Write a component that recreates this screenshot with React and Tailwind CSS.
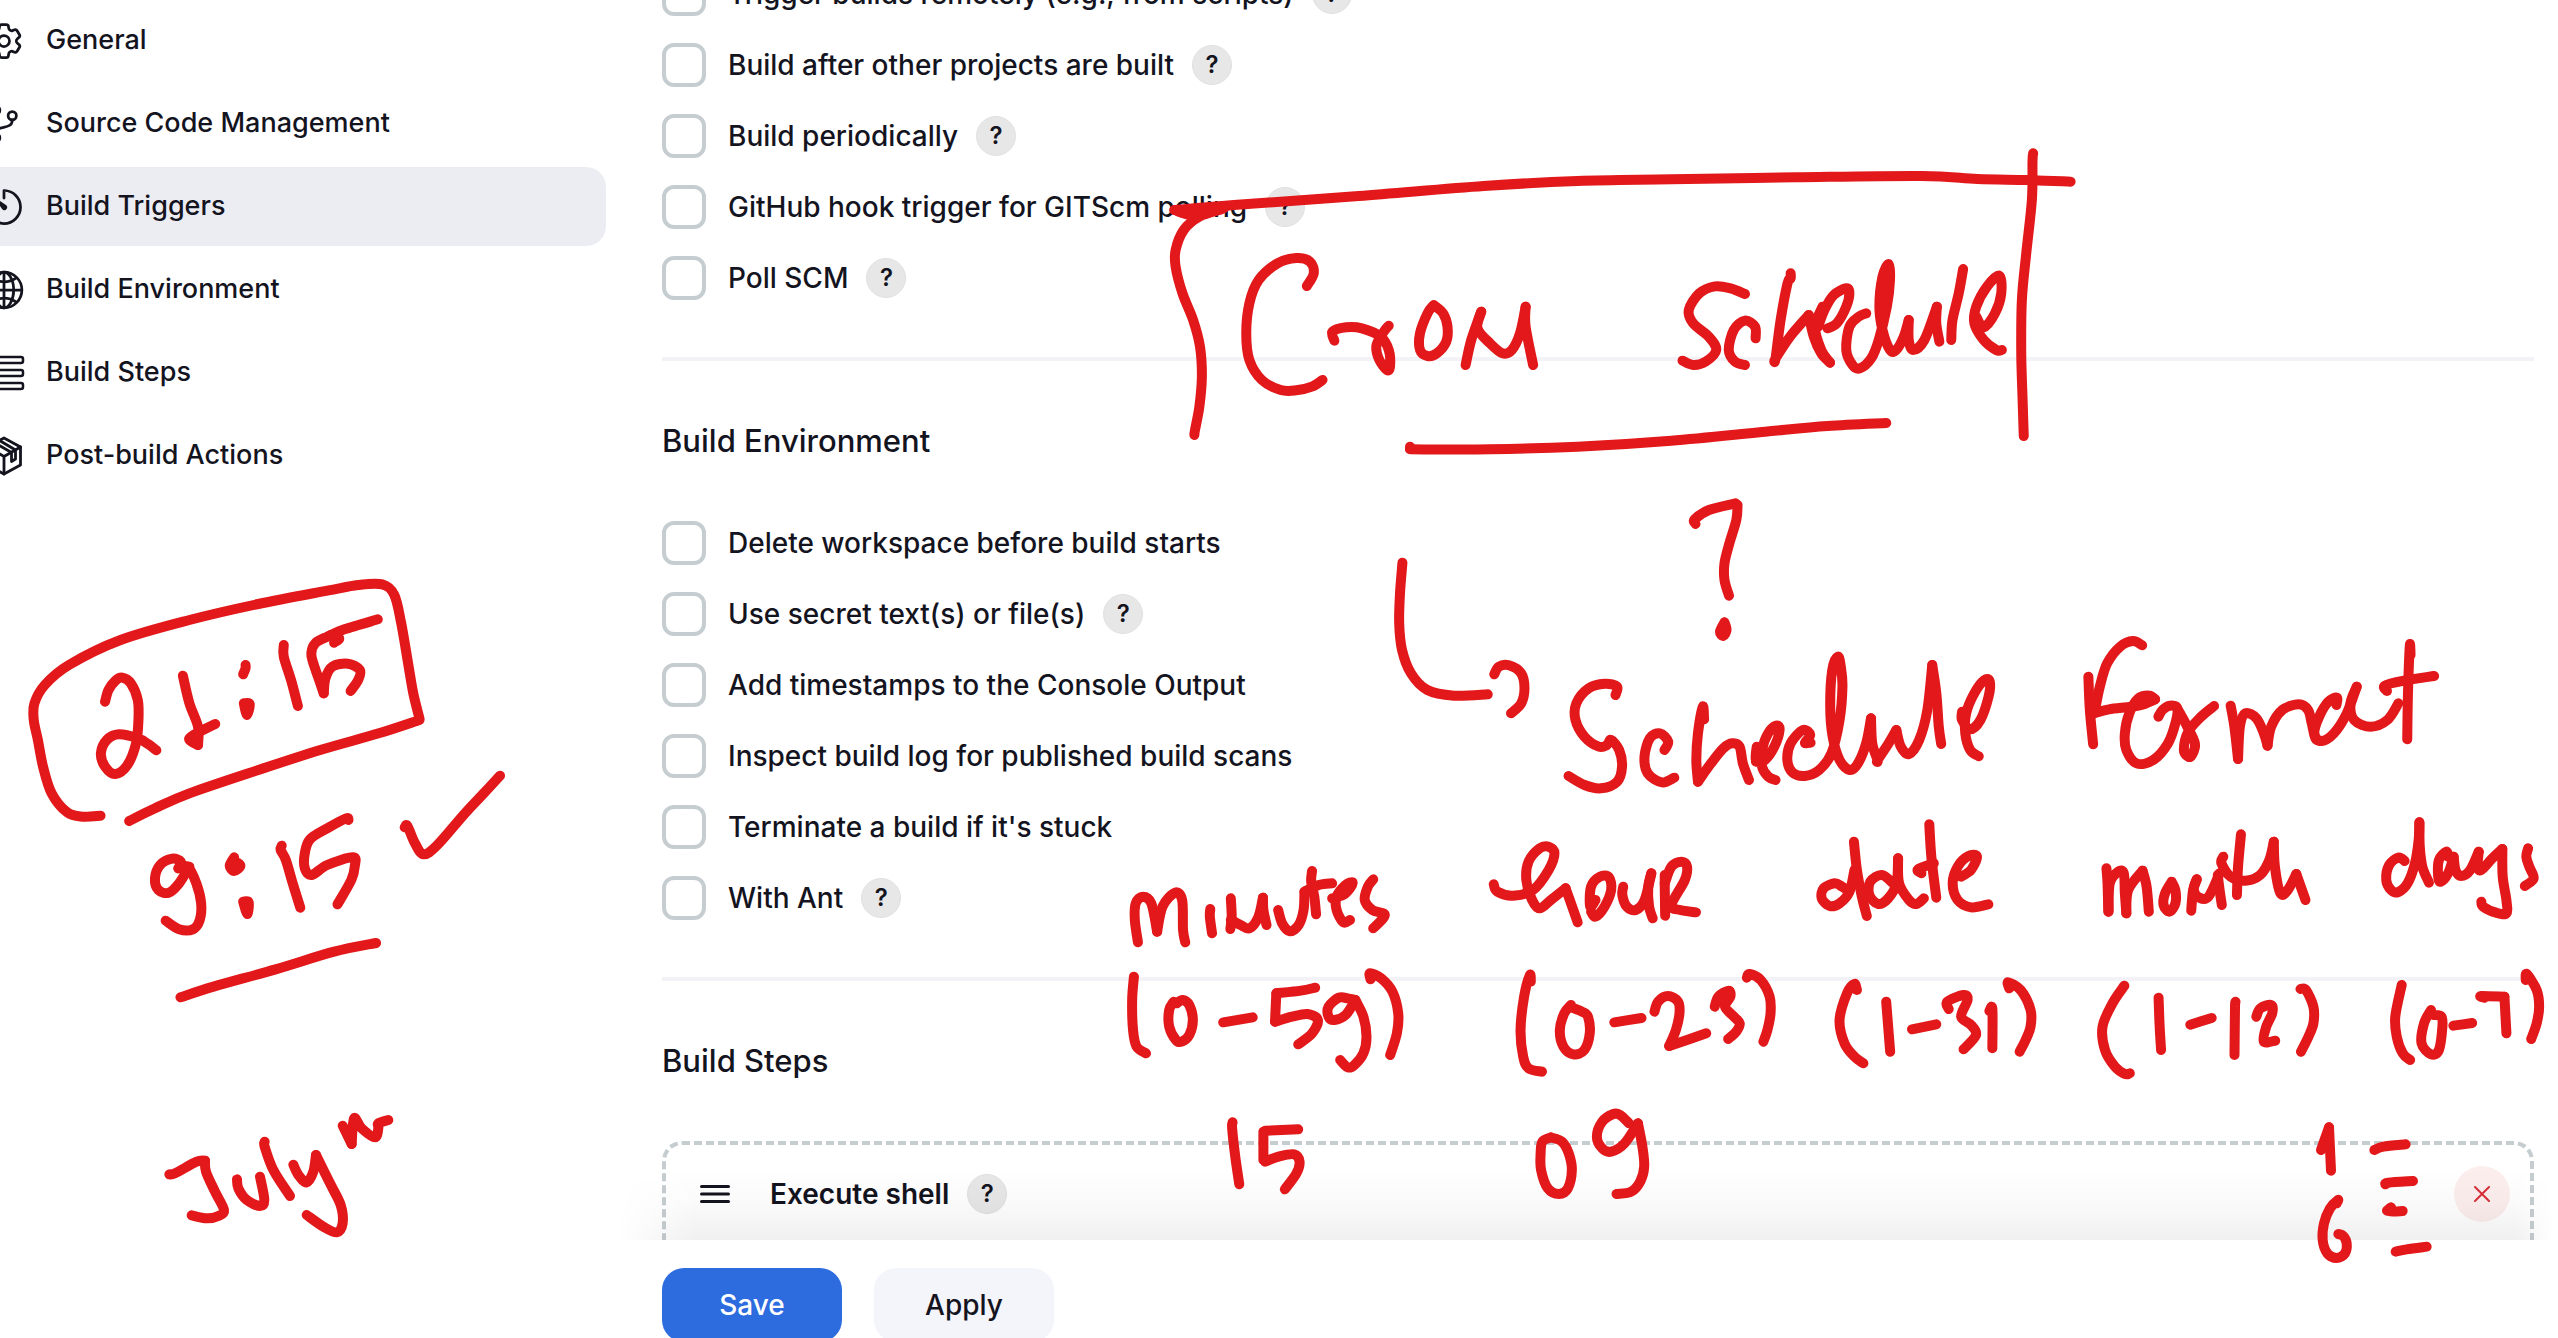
import { HiOutlineCog6Tooth } from "react-icons/hi2";
import { IoGitBranchOutline, IoTimerOutline, IoGlobeOutline } from "react-icons/io5";

function StepsIcon({ className }) {
  return (
    <svg viewBox="0 0 44 44" fill="none" stroke="currentColor" strokeWidth="2.5" className={className}>
      <rect x="3" y="6" width="38" height="6" rx="2" />
      <rect x="3" y="19" width="38" height="6" rx="2" />
      <rect x="3" y="32" width="38" height="6" rx="2" />
    </svg>
  );
}

function PackageIcon({ className }) {
  return (
    <svg
      viewBox="0 0 44 44"
      fill="none"
      stroke="currentColor"
      strokeWidth="2.8"
      strokeLinejoin="round"
      strokeLinecap="round"
      className={className}
    >
      <path d="M22 4 38.500 13v18L22 40 5.500 31V13Z" />
      <path d="M5.500 13 22 22.500 38.500 13M22 22.500V40" />
      <path d="m13 9 16.500 9.500v9l4-2.500v-9L17.500 6.500" />
    </svg>
  );
}

const navItems = [
  { label: "General", Icon: HiOutlineCog6Tooth },
  { label: "Source Code Management", Icon: IoGitBranchOutline },
  { label: "Build Triggers", Icon: IoTimerOutline, active: true },
  { label: "Build Environment", Icon: IoGlobeOutline },
  { label: "Build Steps", Icon: StepsIcon },
  { label: "Post-build Actions", Icon: PackageIcon },
];

const triggers = [
  { id: "remote", label: "Trigger builds remotely (e.g., from scripts)", help: true },
  { id: "after", label: "Build after other projects are built", help: true },
  { id: "periodic", label: "Build periodically", help: true },
  { id: "github", label: "GitHub hook trigger for GITScm polling", help: true },
  { id: "poll", label: "Poll SCM", help: true },
];

const environment = [
  { id: "delete", label: "Delete workspace before build starts" },
  { id: "secret", label: "Use secret text(s) or file(s)", help: true },
  { id: "timestamps", label: "Add timestamps to the Console Output" },
  { id: "inspect", label: "Inspect build log for published build scans" },
  { id: "terminate", label: "Terminate a build if it's stuck" },
  { id: "ant", label: "With Ant", help: true },
];

function Help({ topic }) {
  return (
    <button
      type="button"
      aria-label={`Help for ${topic}`}
      className="flex size-10 shrink-0 items-center justify-center rounded-full border border-[#e1e1e1] bg-[#e7e7e7] text-2xl font-semibold"
    >
      ?
    </button>
  );
}

function Options({ items }) {
  return (
    <div className="flex flex-col gap-[27px]">
      {items.map(({ id, label, help }) => (
        <div key={id} className="flex h-11 items-center">
          <input
            id={id}
            type="checkbox"
            className="size-11 shrink-0 appearance-none rounded-[12px] border-4 border-[#c5cdd0] bg-white checked:bg-[#2d6cdf]"
          />
          <label htmlFor={id} className="mr-[18px] ml-[22px] text-[28px] leading-10 font-[450] whitespace-nowrap">
            {label}
          </label>
          {help && <Help topic={label} />}
        </div>
      ))}
    </div>
  );
}

function Divider() {
  return <hr className="mt-[57px] mb-15 border-0 border-t-4 border-[#f2f2f7]" />;
}

/* Pen strokes: each group has its own origin and unit size; strokes are lists of points joined by a spline. */
const ink = [
  {
    at: "translate(1140 120) scale(0.625 0.33333)",
    strokes: [
      "55,270 150,255 350,228 550,198 700,183 850,178 1050,172 1250,168 1340,177 1420,180 1489,185",
      "55,270 85,285 130,265 130,268 95,290 70,330 57,390 57,440 68,520 85,600 96,680 99,770 95,860 88,930 87,945",
      "1429,100 1428,125 1427,240 1418,400 1411,540 1410,700 1412,830 1414,948",
      "432,980 432,986",
      "432,988 560,988 700,980 850,962 1000,935 1100,918 1194,909",
      "267,498 278,460 272,425 250,414 220,430 190,480 175,550 170,640 175,720 195,780 225,810 250,811 275,800 292,780",
      "311,662 308,635 330,622 355,625 385,650 398,690 400,740 395,750 383,720 378,680 385,650 392,630 398,617",
      "470,555 485,580 492,620 490,665 475,700 460,708 448,690 448,640 460,580 470,555",
      "521,735 530,660 546,575",
      "546,575 540,625 560,670 580,700 595,690 608,640 617,560",
      "617,560 617,620 629,735",
      "968,522 945,505 920,499 895,520 878,570 885,610 910,650 922,690 905,725 885,735 868,722",
      "985,655 984,620 968,602 950,630 942,690 952,725 968,735",
      "1041,460 1041,475 1036,490 1025,600 1017,715 1017,715 1040,650 1070,585",
      "1070,585 1078,650 1090,700 1104,728",
      "1092,560 1080,620 1090,690 1104,728",
      "1100,625 1115,610 1130,560 1135,520 1130,505 1110,525 1095,570 1085,620",
      "1162,580 1150,590 1135,620 1130,690 1140,735 1152,745 1170,715 1182,660 1195,560 1200,480 1198,432 1188,470 1183,560 1188,630 1200,690 1210,690 1222,650 1230,600",
      "1230,600 1230,660 1237,690 1255,660 1275,560",
      "1275,560 1274,610 1279,665",
      "1317,447 1310,520 1300,600 1298,660",
      "1338,590 1350,622 1368,580 1378,520 1375,467 1355,500 1338,560 1335,610 1350,660 1370,690 1379,690",
    ],
  },
  {
    at: "translate(0 560) scale(0.34439 0.33333)",
    strokes: [
      "292,767 240,770 195,757 150,700 125,620 110,540 98,480 100,430 130,375 200,315 350,240 550,180 750,132 950,92 1040,75 1110,73 1145,105 1165,190 1185,310 1200,400 1218,475",
      "1218,480 1100,520 930,570 750,630 550,700 450,745 375,783",
      "305,425 315,390 335,362 355,353 380,370 400,420 402,480 395,550 370,615 335,642 305,620 293,580 310,540 345,523 400,535 430,552 454,571",
      "531,347 550,430 575,500 575,555",
      "575,555 549,537 580,515 625,492",
      "713,315 713,325 706,343",
      "708,430 725,432 717,465 708,430",
      "824,255 824,290 845,360 865,438",
      "1097,178 1000,208 950,230 915,250 904,280 910,310 930,370 940,400",
      "940,400 945,355 965,320 1010,311 1045,330 1040,360 1018,393",
      "960,225 985,235 970,248",
      "518,925 525,905 500,896 465,915 450,955 460,990 490,998 520,970 550,920",
      "518,925 545,920 570,970 584,1030 580,1080 560,1108 520,1108 481,1082",
      "680,892 667,917 680,933 698,917 680,905 667,917",
      "706,1025 722,1027 718,1062 706,1025",
      "818,857 815,870 830,900 850,970 872,1043",
      "1012,780 1005,775 950,805 900,838 885,880 885,925 905,945 950,915 1025,892 1030,920 1020,960 980,1033",
      "1175,802 1183,798 1205,850 1230,883 1270,855 1350,760 1400,705 1452,647",
      "524,1312 620,1280 800,1228 970,1175 1092,1149",
    ],
  },
  {
    at: "translate(100 1080) scale(0.33333)",
    strokes: [
      "208,283 225,280 290,245 315,242",
      "315,242 318,275 345,335 372,390 355,408 320,415 275,406",
      "411,298 415,325 440,360 480,378 493,360 480,290",
      "494,185 494,200 520,270 570,348",
      "580,254 595,285 620,307 640,275 648,225",
      "648,225 690,310 722,375 728,430 710,457 670,440 620,405",
      "728,137 755,192",
      "755,192 762,115 785,145 825,172 835,145 835,130 865,120",
    ],
  },
  {
    at: "translate(1360 480) scale(0.40816 0.33333)",
    strokes: [
      "104,248 98,340 96,430 103,510 125,580 165,630 230,647 313,643",
      "329,583 340,560 365,556 395,580 403,625 395,670 370,700",
      "822,132 820,118 855,90 920,70",
      "925,75 922,120 905,190 893,250 893,300 904,347",
      "893,427 882,455 890,468 898,450 893,427",
      "626,645 630,620 600,611 560,625 530,670 528,720 550,770 585,800 605,795 615,780 635,810 642,860 630,905 590,925 550,915 511,888",
      "746,810 755,785 735,760 710,775 697,830 705,880 740,907 770,893",
      "843,718 840,680 828,760 824,840 828,905",
      "828,905 860,850 890,805 912,790 930,800 938,850 953,900",
      "972,800 970,840 990,842 1015,800 1028,750 1020,737 1000,760 985,810 985,860 1000,890 1018,900",
      "970,845 985,825",
      "1104,788 1090,788 1103,765 1085,750 1055,790 1047,840 1060,878 1090,888 1125,870 1155,820 1175,720 1182,620 1178,560 1171,530 1157,570 1152,680 1158,770 1175,840 1200,870 1220,850 1240,790 1252,715",
      "1252,715 1255,790 1268,840 1268,840 1295,790 1314,750",
      "1314,750 1325,800 1345,822 1370,780 1390,690 1402,555",
      "1402,555 1412,640 1418,740 1424,792",
      "1475,695 1475,720 1495,748 1520,720 1540,650 1543,605 1530,600 1505,640 1485,700 1483,760 1495,810 1516,829",
    ],
  },
  {
    at: "translate(1980 600) scale(0.36862 0.33333)",
    strokes: [
      "294,230 298,330 307,433",
      "440,136 415,123 380,140 345,190 325,260 312,330",
      "310,340 350,328 430,317 475,298",
      "475,298 460,287 430,295 405,340 393,400 397,450 425,490 470,480 510,430 530,370 535,325 515,317 495,330 484,350",
      "535,325 560,375 583,430 575,465 565,470 553,450 565,395 600,350 635,318",
      "680,317 690,380 700,477",
      "700,477 705,380 720,340 750,355 770,400 780,437",
      "780,437 790,380 820,330 865,313 890,330 900,370 910,415 925,423",
      "967,315 968,293 945,305 920,350 907,400 925,423 960,400 995,340 1022,260",
      "1022,260 1005,310 1015,360 1060,380 1105,360 1135,310",
      "1168,165 1166,137 1161,280 1159,418",
      "1104,273 1098,257 1150,242 1232,228",
      "343,805 346,850 348,935",
      "349,935 352,850 375,815 390,820 393,880 397,940",
      "397,940 402,870 441,812",
      "441,812 452,860 458,935",
      "520,845 530,870 530,910 514,935 498,915 502,880 520,845",
      "573,932 578,870 588,838",
      "588,838 580,870 595,893 620,890 650,820",
      "645,825 650,870 656,915",
      "660,770 655,790 680,830 720,842 760,825 785,780 797,725",
      "708,703 700,800 697,885",
      "797,725 800,800 815,880 835,870 858,822",
      "858,822 883,900",
      "1152,783 1135,773 1110,795 1102,840 1115,870 1135,876 1160,850 1180,790 1190,720 1192,667",
      "1192,667 1193,740 1200,800 1218,848",
      "1270,770 1265,755 1245,780 1243,830 1250,845 1270,820 1285,770",
      "1285,770 1290,810 1305,828 1330,810 1353,755",
      "1353,755 1350,800 1360,810 1390,775 1417,747",
      "1417,747 1418,830 1428,900 1428,940 1400,938 1365,920 1360,905",
      "1487,745 1482,770 1490,800 1502,835 1478,858",
    ],
  },
  {
    at: "translate(1100 820) scale(0.44643 0.33333)",
    strokes: [
      "85,367 78,300 80,250 96,230 115,250 128,335",
      "128,335 140,260 168,218 184,240 186,330 191,367",
      "247,267 246,290 251,340",
      "292,327 295,290 293,235",
      "293,300 315,315 335,325 355,290 365,233",
      "365,233 366,270 373,315",
      "399,270 408,310 425,334 445,315 456,270 458,215",
      "458,215 490,195 520,190",
      "475,153 473,185 480,230 484,283",
      "520,235 545,225 560,205 566,187 550,195 530,230 530,270 545,307 560,300",
      "612,178 600,200 593,240 610,270 638,285 612,325",
      "882,193 890,215 925,227 970,210 1005,150 1018,100 1005,80 985,85 960,125 955,180 968,240 985,265 1010,240 1043,205",
      "1043,205 1055,250 1070,307",
      "1110,240 1098,260 1100,200 1120,170 1140,172 1145,210 1130,260 1110,290 1100,275",
      "1172,200 1170,225 1180,260 1200,270 1220,240 1235,160",
      "1235,160 1228,200 1230,260 1238,295",
      "1265,165 1265,200 1266,287",
      "1265,190 1280,140 1303,125 1315,140 1310,180 1280,255 1300,270 1335,277",
      "76,470 72,540 74,630 82,680 103,700",
      "165,545 155,570 155,620 170,660 183,665 200,645 208,600 200,555 185,540 172,550",
      "276,607 342,592",
      "482,503 450,512 395,520",
      "395,520 392,605",
      "392,605 430,590 465,582 488,600 475,640 444,673",
      "572,540 555,535 535,533 512,560 512,590 525,600 550,585 572,540",
      "572,540 590,590 597,650 590,700 570,735 555,742 538,720",
      "606,478 605,460 630,475 655,515 668,580 665,640 650,705",
      "965,485 963,465 950,530 942,630 948,710 960,745 990,755",
      "1055,555 1040,580 1030,630 1038,680 1060,703 1085,690 1097,640 1093,590 1080,575 1062,565",
      "1152,607 1213,594",
      "1242,575 1250,545 1272,528 1295,545 1298,580 1290,630 1275,678",
      "1275,678 1358,640",
      "1377,560 1385,530 1408,512 1412,530 1400,560 1420,590 1433,610 1425,635 1407,657",
      "1449,473 1455,462 1480,480 1500,530 1502,580 1495,630 1486,665",
      "297,907 296,925 303,1010 312,1093",
      "444,928 370,932",
      "366,935 366,1020",
      "370,1025 400,1010 435,1003 447,1025 440,1060 414,1108",
      "1010,952 1035,965 1050,1000 1057,1050 1048,1105 1028,1122 1003,1105 988,1050 987,1000 991,965 1010,952",
      "1185,910 1165,885 1150,882 1125,905 1113,950 1125,985 1145,995 1175,970 1205,910",
      "1205,910 1215,980 1219,1040 1210,1085 1190,1115 1157,1122",
    ],
  },
  {
    at: "translate(1780 820) scale(0.49618 0.33333)",
    strokes: [
      "140,215 125,200 110,190 88,205 84,235 100,258 120,250 140,215 150,150",
      "149,65 155,150 165,230 175,288",
      "228,190 205,165 182,185 180,225 198,252 218,235 235,190 238,115",
      "238,115 240,190 260,240 275,252 290,235",
      "302,45 301,15 305,110 315,233",
      "285,160 278,148 310,130",
      "365,170 385,150 397,110 380,108 358,140 348,190 358,240 385,262 420,253",
      "155,510 150,492 135,520 120,600 130,670 150,710 168,730",
      "214,545 222,695",
      "266,628 315,613",
      "340,567 337,545 370,525 378,540 365,590 385,615 395,645 370,688",
      "422,573 428,567 428,685",
      "462,505 460,487 485,510 505,570 505,620 495,660 483,695",
      "694,497 670,550 650,620 655,690 675,740 695,762 705,760",
      "763,533 765,615 768,690",
      "827,614 870,594",
      "918,545 917,565 916,705",
      "960,590 968,565 990,555 992,580 980,620 975,665 998,662",
      "1049,507 1060,510 1075,560 1075,610 1065,650 1050,695",
      "1253,495 1240,590 1243,650 1255,700 1270,720",
      "1312,570 1298,610 1293,670 1312,703 1328,690 1335,620 1333,590 1318,585",
      "1357,617 1395,609",
      "1420,533 1413,528 1460,530",
      "1460,530 1464,640",
      "1503,480 1505,462 1525,510 1530,560 1525,610 1514,657",
    ],
  },
  {
    at: "translate(2240 1090) scale(0.33333)",
    strokes: [
      "243,180 267,112",
      "267,112 273,242",
      "290,340 294,330 270,355 252,400 248,450 262,490 290,504 315,490 320,460 310,438 295,432",
      "403,180 430,170 497,163",
      "436,283 445,278 519,273",
      "441,362 453,352 450,364 488,363",
      "467,485 500,478 560,470",
    ],
  },
];

function spline(stroke) {
  const p = stroke.split(" ").map((pair) => pair.split(",").map(Number));
  let d = `M${p[0][0]} ${p[0][1]}`;
  for (let i = 0; i < p.length - 1; i++) {
    const a = p[i - 1] || p[i];
    const b = p[i];
    const c = p[i + 1];
    const e = p[i + 2] || c;
    d += `C${b[0] + (c[0] - a[0]) / 6} ${b[1] + (c[1] - a[1]) / 6} ${c[0] - (e[0] - b[0]) / 6} ${c[1] - (e[1] - b[1]) / 6} ${c[0]} ${c[1]}`;
  }
  return d;
}

function Annotations() {
  return (
    <svg
      role="img"
      aria-label="Handwritten notes on the cron schedule format"
      className="pointer-events-none absolute inset-0 z-20 size-full"
      fill="none"
      stroke="#e2181b"
      strokeWidth="10"
      strokeLinecap="round"
      strokeLinejoin="round"
    >
      {ink.map(({ at, strokes }) => (
        <g key={at} transform={at}>
          {strokes.map((s) => (
            <path key={s} d={spline(s)} vectorEffect="non-scaling-stroke" />
          ))}
        </g>
      ))}
    </svg>
  );
}

export default function App() {
  return (
    <div className="relative flex h-screen overflow-hidden bg-white font-[Inter,sans-serif] text-[#14141f]">
      <nav aria-label="Configure" className="-ml-12 flex w-[654px] shrink-0 flex-col gap-1 pt-px">
        {navItems.map(({ label, Icon, active }) => (
          <a
            key={label}
            href="#"
            aria-current={active ? "page" : undefined}
            className={`flex h-[79px] items-center gap-5 rounded-[20px] pl-[30px] text-[27px] font-medium ${active ? "bg-[#ecedf3]" : ""}`}
          >
            <Icon className="size-11 shrink-0" />
            <span>{label}</span>
          </a>
        ))}
      </nav>

      <main className="mr-1 ml-9 flex min-w-0 flex-1 flex-col">
        <div className="min-h-0 flex-1 px-5">
          <section className="-mt-7">
            <Options items={triggers} />
          </section>
          <Divider />
          <section>
            <h2 className="mb-15 text-[31px] leading-10 font-medium">Build Environment</h2>
            <Options items={environment} />
          </section>
          <Divider />
          <section>
            <h2 className="mb-15 text-[31px] leading-10 font-medium">Build Steps</h2>
            <div className="h-60 rounded-[20px] border-4 border-dashed border-[#c5cdd0] pr-5 pl-[34px]">
              <div className="flex h-[98px] items-center">
                <svg viewBox="0 0 30 20" className="h-5 w-[30px]" stroke="currentColor" strokeWidth="3" strokeLinecap="round">
                  <path d="M1.500 2.500h27M1.500 10h27M1.500 17.500h27" />
                </svg>
                <h3 className="mr-[18px] ml-10 text-[28px] leading-10 font-semibold">Execute shell</h3>
                <Help topic="Execute shell" />
                <button
                  type="button"
                  aria-label="Delete build step"
                  className="ml-auto flex size-14 items-center justify-center rounded-full bg-[#fdeeee] text-[#d9303a]"
                >
                  <svg viewBox="0 0 16 16" className="size-4" stroke="currentColor" strokeWidth="2" strokeLinecap="round">
                    <path d="m1 1 14 14M15 1 1 15" />
                  </svg>
                </button>
              </div>
            </div>
          </section>
        </div>
        <footer className="relative z-10 flex h-[98px] shrink-0 gap-8 bg-white px-5 pt-7">
          <div className="pointer-events-none absolute inset-x-0 bottom-full -ml-6 h-[72px] bg-linear-to-t from-black/6 via-black/2 to-transparent mask-[linear-gradient(to_right,transparent,black_80px,black_calc(100%-40px),transparent)]" />
          <button type="button" className="h-[74px] w-[180px] rounded-[22px] bg-[#2d6cdf] text-[28px] font-[450] text-white">
            Save
          </button>
          <button type="button" className="h-[74px] w-[180px] rounded-[22px] bg-[#f4f5fa] text-[28px] font-[450]">
            Apply
          </button>
        </footer>
      </main>

      <Annotations />
    </div>
  );
}
